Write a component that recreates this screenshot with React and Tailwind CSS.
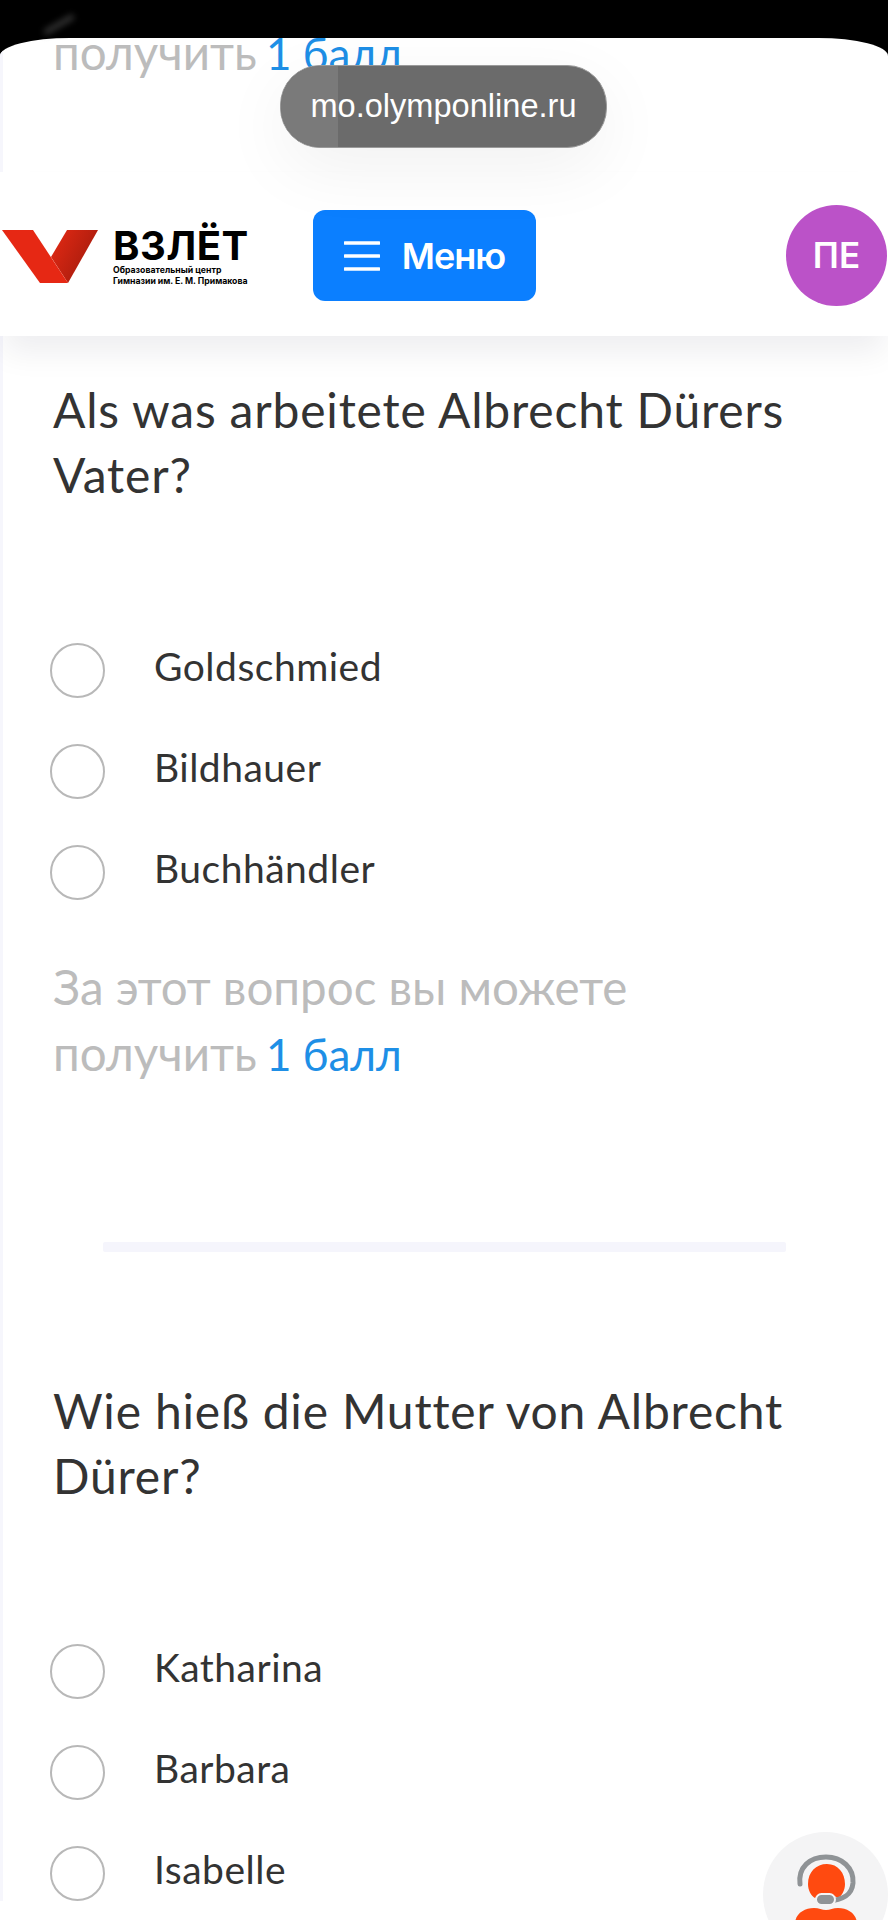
import React from 'react';

const FONT = 'font-["Lato","Noto_Sans",sans-serif]';

const Radio = ({ label }) => (
  <div className="flex items-center h-[101px]">
    <span className="w-[55px] h-[55px] rounded-full border-2 border-[#b8b8b8] bg-white shrink-0" />
    <span className="ml-[49px] text-[39px] tracking-[0.5px] leading-[50px] text-[#333333] -mt-[10px]">{label}</span>
  </div>
);

const Points = () => (
  <p className="text-[47.5px] leading-[66px] text-[#bcbcbc]">
    получить <span className="-ml-[3px] text-[44px] text-[#1e8fe6]">1 балл</span>
  </p>
);

const Question = ({ title, answers }) => (
  <section>
    <h2 className="text-[48px] tracking-[0.8px] leading-[65px] text-[#333333] font-normal">{title}</h2>
    <div className="mt-[113px] -ml-[3px]">
      {answers.map((a) => (
        <Radio key={a} label={a} />
      ))}
    </div>
  </section>
);

const Logo = () => (
  <div className="flex items-start w-[313px] shrink-0">
    <svg width="100" height="56" viewBox="0 0 100 56" className="shrink-0">
      <defs>
        <linearGradient id="vDark" x1="0" y1="0" x2="1" y2="0.6">
          <stop offset="0" stopColor="#e62a14" />
          <stop offset="1" stopColor="#a31b0d" />
        </linearGradient>
      </defs>
      <path d="M98 2H67L51 29l17 26z" fill="url(#vDark)" />
      <path d="M2 2h31l35 53H40z" fill="#e62814" />
    </svg>
    <div className="ml-[13px] text-black">
      <div className="text-[40px] leading-[32px] font-bold font-['Inter',sans-serif] mt-[2px] tracking-[0.5px]">ВЗЛЁТ</div>
      <div className="text-[8.7px] leading-[11px] font-bold font-['Inter',sans-serif] mt-[3px] whitespace-nowrap">
        <div>Образовательный центр</div>
        <div>Гимназии им. Е. М. Примакова</div>
      </div>
    </div>
  </div>
);

const Support = () => (
  <div className="absolute left-[763px] top-[1832px] w-[125px] h-[125px] rounded-full bg-[#f4f4f5] overflow-hidden">
    <svg width="125" height="88" viewBox="0 0 125 88">
      <path d="M45 52c0-12 8-20 19-20s18 9 18 20c0 6-3 12-7 14-3-2-6-3-11-3s-9 1-12 3c-4-2-7-8-7-14z" fill="#ff4a10" />
      <path d="M37 52c-2-17 10-27 26-27s28 11 27 26c-1 11-8 17-26 18" fill="none" stroke="#8f9396" strokeWidth="5" strokeLinecap="round" />
      <rect x="53" y="62" width="19" height="11" rx="5.5" fill="#8f9396" stroke="#f4f4f5" strokeWidth="2" />
      <path d="M32 92c0-10 9-16 19-16 5 0 8 2 12 2s7-2 12-2c10 0 19 6 19 16z" fill="#ff4a10" />
    </svg>
  </div>
);

const App = () => {
  return (
    <div className={`relative w-[888px] h-[1920px] overflow-hidden bg-black pt-[38px] ${FONT}`}>
      {/* glare on the black bar */}
      <div className="absolute left-[42px] top-[22px] w-[34px] h-[5px] rounded-full bg-[#3a3a3a] blur-[3px] -rotate-[30deg]" />

      <div className="h-full bg-white rounded-[70px_70px_0_0/18px_18px_0_0] overflow-hidden">
        <div className="h-full border-l-[3px] border-[#f6f6fc] px-[50px]">
          <div className="-mt-[19px] h-[358px]">
            <Points />
          </div>

          <Question
            title="Als was arbeitete Albrecht Dürers Vater?"
            answers={['Goldschmied', 'Bildhauer', 'Buchhändler']}
          />

          <div className="mt-[31px]">
            <p className="text-[47.5px] leading-[66px] text-[#bcbcbc]">За этот вопрос вы можете</p>
            <Points />
          </div>

          <div className="mt-[155px] ml-[50px] w-[683px] h-[10px] rounded-[2px] bg-[#f5f5fc]" />

          <div className="mt-[126px]">
            <Question
              title="Wie hieß die Mutter von Albrecht Dürer?"
              answers={['Katharina', 'Barbara', 'Isabelle']}
            />
          </div>
        </div>
      </div>

      <header className="absolute inset-x-0 top-[172px] h-[164px] bg-white flex items-center pr-[1px] shadow-[0_20px_30px_-4px_rgba(20,20,40,0.07)]">
        <div className="mt-[7px]">
          <Logo />
        </div>
        <button className="w-[223px] h-[91px] mt-[3px] rounded-[12px] bg-[#0b7fff] text-white flex items-center justify-center gap-[22px] text-[36px] font-semibold font-['Inter',sans-serif] tracking-[-1px]">
          <svg width="36" height="32" viewBox="0 0 36 32">
            <path d="M1 3h34M1 16h34M1 29h34" stroke="#fff" strokeWidth="3.5" strokeLinecap="round" />
          </svg>
          Меню
        </button>
        <div className="ml-auto mt-[2px] w-[101px] h-[101px] rounded-full bg-[#bb52c8] text-white flex items-center justify-center text-[35px] font-semibold font-['Inter',sans-serif]">
          ПЕ
        </div>
      </header>

      <div className="absolute left-[280px] top-[65px] w-[327px] h-[83px] rounded-[40px] bg-[#6b6b6b] border border-[#9a9a9a] overflow-hidden shadow-[0_20px_70px_rgba(0,0,0,0.06)]">
        <div className="absolute inset-y-0 left-0 w-[57px] bg-[#7a7a7a]" />
        <div className="relative h-full flex items-center justify-center text-white text-[32.6px] font-['Liberation_Sans',sans-serif]">
          mo.olymponline.ru
        </div>
      </div>

      <Support />
    </div>
  );
};

export default App;
